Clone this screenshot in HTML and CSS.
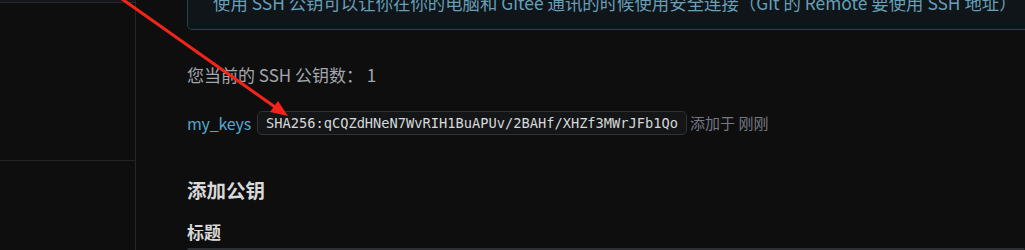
FILE: index.html
```html
<!DOCTYPE html>
<html lang="zh-CN">
<head>
<meta charset="utf-8">
<title>SSH 公钥</title>
<link rel="stylesheet" href="styles.css">
</head>
<body>
<div class="page">
  <aside class="sidebar">
    <div class="side-top"></div>
    <div class="side-block"></div>
  </aside>
  <main class="main">
    <div class="info">使用 SSH 公钥可以让你在你的电脑和 Gitee 通讯的时候使用安全连接（Git 的 Remote 要使用 SSH 地址）</div>
    <p class="count">您当前的 SSH 公钥数： 1</p>
    <div class="key-row">
      <a class="key-name" href="#">my_keys</a>
      <code class="fingerprint">SHA256:qCQZdHNeN7WvRIH1BuAPUv/2BAHf/XHZf3MWrJFb1Qo</code>
      <span class="added">添加于 刚刚</span>
    </div>
    <h3 class="section-title">添加公钥</h3>
    <label class="field-label">标题</label>
    <div class="input"></div>
  </main>
</div>
<svg class="arrow" width="1025" height="250" viewBox="0 0 1025 250">
  <line x1="122" y1="-1" x2="275" y2="107" stroke="#f5241a" stroke-width="3"/>
  <polygon points="288,116 270,112 278,101" fill="#f5241a"/>
</svg>
</body>
</html>
```
FILE: styles.css
```css
html, body {
  margin: 0;
  padding: 0;
  background: #0e0e0f;
  overflow: hidden;
}
body {
  width: 1025px;
  height: 250px;
  position: relative;
  font-family: "Noto Sans CJK SC", "Noto Sans", sans-serif;
}
.page {
  display: flex;
  height: 250px;
}
.sidebar {
  width: 135px;
  flex: none;
  border-right: 1px solid #252628;
}
.side-top {
  height: 2px;
  background: #141618;
  border-bottom: 1px solid #262a2f;
}
.side-block {
  height: 157px;
  border-bottom: 1px solid #222427;
}
.main {
  flex: 1;
  padding-left: 51px;
  display: flex;
  flex-direction: column;
  align-items: flex-start;
  min-width: 0;
}
.info {
  margin-top: -20px;
  align-self: stretch;
  margin-right: -30px;
  box-sizing: border-box;
  height: 50px;
  padding: 10px 0 14px 25px;
  border: 1px solid #1d4553;
  border-radius: 5px;
  background: #0f1518;
  color: #679fb9;
  font-size: 17.4px;
  line-height: 24px;
  white-space: nowrap;
}
.count {
  margin: 33px 0 0;
  font-size: 17px;
  line-height: 24px;
  color: #a3a7ae;
}
.key-row {
  margin-top: 24px;
  display: flex;
  align-items: center;
  gap: 6px;
  height: 24px;
}
.key-name {
  color: #56a6d0;
  text-decoration: none;
  font-size: 16px;
  line-height: 24px;
  letter-spacing: -0.2px;
}
.fingerprint {
  box-sizing: border-box;
  height: 24px;
  padding: 0 8px;
  border: 1px solid #2e3136;
  border-radius: 5px;
  background: #141517;
  color: #d6d8da;
  font-family: "DejaVu Sans Mono", monospace;
  font-size: 13.7px;
  line-height: 22px;
  margin-right: -3px;
}
.added {
  color: #737881;
  font-size: 15px;
  line-height: 24px;
}
.section-title {
  margin: 41px 0 0;
  font-size: 19.5px;
  line-height: 28px;
  font-weight: 700;
  color: #d9d9d9;
}
.field-label {
  margin-top: 16px;
  font-size: 17px;
  line-height: 24px;
  font-weight: 700;
  color: #d9d9d9;
}
.input {
  margin-top: 4px;
  align-self: stretch;
  height: 36px;
  border: 1px solid #2c2f33;
  border-radius: 4px;
  background: #141517;
}
.arrow {
  position: absolute;
  left: 0;
  top: 0;
  pointer-events: none;
}
```
